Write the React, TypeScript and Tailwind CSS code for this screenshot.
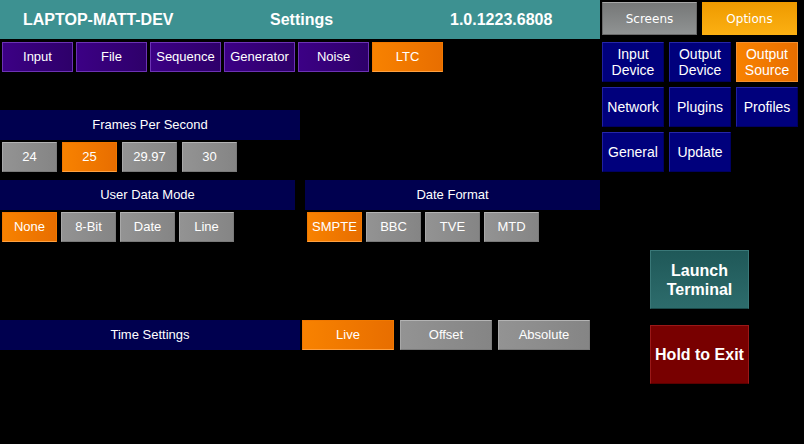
const tabs = ["Input", "File", "Sequence", "Generator", "Noise", "LTC"];
const fps = ["24", "25", "29.97", "30"];
const userData = ["None", "8-Bit", "Date", "Line"];
const dateFormats = ["SMPTE", "BBC", "TVE", "MTD"];

const orange =
  "bg-gradient-to-r from-[#f88200] to-[#e86e00] border border-[#f07800] border-b-[#ffa040]";
const gray =
  "bg-gradient-to-r from-[#939393] to-[#858585] border border-[#7a7a7a] border-t-[#b4b4b4] border-l-[#a8a8a8]";

function SmallBtn({ label, active, w }: { label: string; active?: boolean; w: string }) {
  return (
    <div
      className={`${w} h-[30px] flex items-center justify-center text-[13px] ${active ? orange : gray}`}
    >
      {label}
    </div>
  );
}

function Bar({ label, w }: { label: string; w: string }) {
  return (
    <div className={`${w} h-[30px] bg-[#00004f] flex items-center justify-center text-[13px]`}>
      {label}
    </div>
  );
}

function NavBtn({ label, active }: { label: string; active?: boolean }) {
  return (
    <div
      className={`h-[40px] flex items-center justify-center text-center leading-[16px] text-[14px] ${
        active
          ? "bg-gradient-to-r from-[#f88200] to-[#e86e00] border border-[#f59030]"
          : "bg-[#00007c] border border-[#000060] border-t-[#2626a8] border-l-[#2020a0]"
      }`}
    >
      {label}
    </div>
  );
}

export default function App() {
  return (
    <div className="w-[804px] h-[444px] bg-black flex text-white font-['Liberation_Sans',Arial,sans-serif] overflow-hidden">
      {/* left side */}
      <div className="w-[600px] flex flex-col">
        <div className="h-[39px] bg-[#3d9191] flex items-center font-bold text-[16px]">
          <span className="w-[270px] pl-[23px]">LAPTOP-MATT-DEV</span>
          <span className="w-[180px]">Settings</span>
          <span>1.0.1223.6808</span>
        </div>

        <div className="mt-[3px] pl-[2px] flex gap-[3px]">
          {tabs.map((t) => (
            <div
              key={t}
              className={`w-[71px] h-[30px] flex items-center justify-center text-[13px] ${
                t === "LTC"
                  ? "bg-gradient-to-r from-[#f88200] to-[#e86e00] border border-[#f07800] border-b-[#ffa040]"
                  : "bg-gradient-to-r from-[#3c0085] to-[#2e006a] border border-[#6c32b4]"
              }`}
            >
              {t}
            </div>
          ))}
        </div>

        <div className="mt-[38px]">
          <Bar label="Frames Per Second" w="w-[300px]" />
          <div className="mt-[2px] pl-[2px] flex gap-[5px]">
            {fps.map((f) => (
              <SmallBtn key={f} label={f} active={f === "25"} w="w-[55px]" />
            ))}
          </div>
        </div>

        <div className="mt-[8px] flex gap-[10px]">
          <div>
            <Bar label="User Data Mode" w="w-[295px]" />
            <div className="mt-[2px] pl-[2px] flex gap-[4px]">
              {userData.map((u) => (
                <SmallBtn key={u} label={u} active={u === "None"} w="w-[55px]" />
              ))}
            </div>
          </div>
          <div>
            <Bar label="Date Format" w="w-[295px]" />
            <div className="mt-[2px] pl-[2px] flex gap-[4px]">
              {dateFormats.map((d) => (
                <SmallBtn key={d} label={d} active={d === "SMPTE"} w="w-[55px]" />
              ))}
            </div>
          </div>
        </div>

        <div className="mt-[78px] flex">
          <Bar label="Time Settings" w="w-[300px]" />
          <div className="ml-[2px] flex gap-[6px]">
            <SmallBtn label="Live" active w="w-[92px]" />
            <SmallBtn label="Offset" w="w-[92px]" />
            <SmallBtn label="Absolute" w="w-[92px]" />
          </div>
        </div>
      </div>

      {/* right side */}
      <div className="w-[204px] pl-[2px] flex flex-col">
        <div className="mt-[2px] flex gap-[5px] text-[12px] font-['DejaVu_Sans',sans-serif]">
          <div className="w-[95px] h-[33px] flex items-center justify-center bg-gradient-to-b from-[#767878] to-[#909393] border border-[#6a6a6a] border-t-[#a8a8a8]">
            Screens
          </div>
          <div className="w-[95px] h-[33px] flex items-center justify-center bg-gradient-to-b from-[#ee9a00] to-[#fcb012]">
            Options
          </div>
        </div>

        <div className="mt-[7px] grid grid-cols-[62px_62px_62px] gap-[5px]">
          <NavBtn label="Input Device" />
          <NavBtn label="Output Device" />
          <NavBtn label="Output Source" active />
          <NavBtn label="Network" />
          <NavBtn label="Plugins" />
          <NavBtn label="Profiles" />
          <NavBtn label="General" />
          <NavBtn label="Update" />
        </div>

        <div className="mt-[78px] ml-[48px] w-[99px] h-[59px] flex items-center justify-center text-center font-bold text-[16px] leading-[19px] bg-gradient-to-b from-[#1f5858] to-[#2d6c6c] border border-[#3a7878] border-b-[#1a4848]">
          Launch
          <br />
          Terminal
        </div>
        <div className="mt-[16px] ml-[48px] w-[99px] h-[59px] flex items-center justify-center font-bold text-[16px] bg-[#780000] border border-[#9a1818] border-b-[#5a0000]">
          Hold to Exit
        </div>
      </div>
    </div>
  );
}
